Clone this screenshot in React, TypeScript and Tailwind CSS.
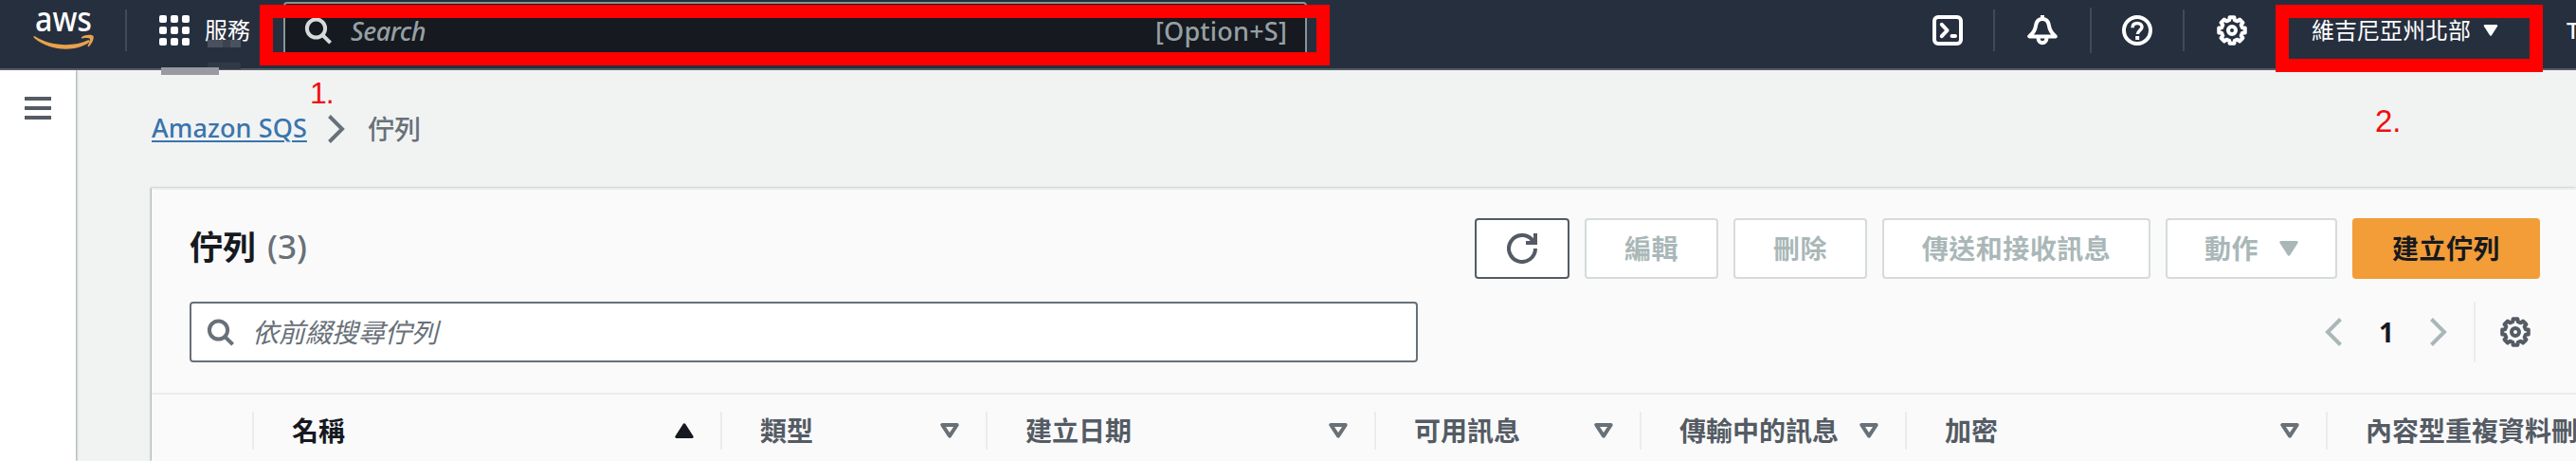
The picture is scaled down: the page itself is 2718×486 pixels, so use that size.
import React from "react";

type IconProps = { className?: string };

const cjk = "font-['Noto_Sans_CJK_TC',sans-serif]";
const latin = "font-['Noto_Sans','Noto_Sans_CJK_TC',sans-serif]";

function gearPath(): string {
  const pts: string[] = [];
  for (let i = 0; i < 8; i++) {
    const base = i * 45 - 90;
    const steps: [number, number][] = [
      [-14.5, 11.2],
      [-10, 14],
      [10, 14],
      [14.5, 11.2],
    ];
    for (const [deg, r] of steps) {
      const a = ((base + deg) * Math.PI) / 180;
      pts.push(`${(16 + r * Math.cos(a)).toFixed(2)} ${(16 + r * Math.sin(a)).toFixed(2)}`);
    }
  }
  return `M${pts.join("L")}Z`;
}
const GEAR = gearPath();

function GearIcon({ className }: IconProps) {
  return (
    <svg viewBox="0 0 32 32" className={`size-8 shrink-0 ${className ?? ""}`} fill="none" stroke="currentColor" strokeWidth={4} strokeLinejoin="round">
      <path d={GEAR} />
      <circle cx="16" cy="16" r="4" />
    </svg>
  );
}

function SearchIcon({ className }: IconProps) {
  return (
    <svg viewBox="0 0 32 32" className={`size-8 shrink-0 ${className ?? ""}`} fill="none" stroke="currentColor" strokeWidth={4}>
      <circle cx="13.5" cy="13" r="9.6" />
      <path d="M20.2 19.8L28.6 28.2" />
    </svg>
  );
}

function TerminalIcon() {
  return (
    <svg viewBox="0 0 32 32" className="size-8" fill="none" stroke="currentColor" strokeWidth={4} strokeLinecap="round" strokeLinejoin="round">
      <rect x="2" y="2" width="28" height="28" rx="4" />
      <path d="M9.8 9.8l5.8 6.2l-5.8 6.2" />
      <path d="M20.5 22h3.5" />
    </svg>
  );
}

function BellIcon() {
  return (
    <svg viewBox="0 0 32 32" className="size-8" fill="none" stroke="currentColor" strokeWidth={4} strokeLinejoin="round">
      <path d="M16 4c-4 0-6.2 2.8-6.8 6.4C8.4 16 6.6 19 2.2 22.4h27.6C25.4 19 23.6 16 22.8 10.4C22.2 6.8 20 4 16 4z" />
      <path d="M16 0v4" />
      <path d="M11.6 23v1.8a4.4 4.4 0 0 0 8.8 0V23" />
    </svg>
  );
}

function HelpIcon() {
  return (
    <svg viewBox="0 0 32 32" className="size-8" fill="none" stroke="currentColor" strokeWidth={4}>
      <circle cx="16" cy="16" r="14" />
      <path d="M11 13.2C11 9.8 13 8.4 16 8.4s5 1.7 5 4.2c0 3-4.6 3.8-4.6 7.4" strokeWidth={3.5} />
      <path d="M14.2 22h4v4h-4z" fill="currentColor" stroke="none" />
    </svg>
  );
}

function RefreshIcon() {
  return (
    <svg viewBox="0 0 32 32" className="size-8" fill="none" stroke="currentColor" strokeWidth={4}>
      <path d="M30 16A14 14 0 1 1 27 7.3" />
      <path d="M30 0v10H20" />
      <path d="M24 8l4-3v5z" fill="currentColor" stroke="none" />
    </svg>
  );
}

function AwsLogo() {
  return (
    <svg viewBox="0 0 68 44" className="h-11 w-[68px] overflow-visible">
      <text x="2" y="23" fontSize="36" fill="#ffffff" textLength="60" lengthAdjust="spacingAndGlyphs" fontFamily="'Noto Sans', sans-serif" fontWeight="500">
        aws
      </text>
      <path d="M1.5 28C18 39 43 39.5 57.5 32.5C59.5 31.7 60.5 33.5 59 34.8C43 46 16 43 1 30C0 28.8 0.5 27.5 1.5 28Z" fill="#e8a24c" />
      <path d="M51 29.2C55 26.2 62 26.4 63.5 28C64.5 30.5 62 36.5 58.8 39C57.8 39.5 57.3 39 57.7 38C59 35.5 60.5 32 59.8 30.8C58.8 29.7 55 30 52 30.4C50.8 30.5 50.5 29.9 51 29.2Z" fill="#e8a24c" />
    </svg>
  );
}

function AppsIcon() {
  return (
    <div className="grid size-8 grid-cols-3 gap-1">
      {Array.from({ length: 9 }, (_, i) => (
        <span key={i} className="size-2 rounded-[2px] bg-white" />
      ))}
    </div>
  );
}

function CaretDown({ className }: IconProps) {
  return (
    <svg viewBox="0 0 20 16" className={`shrink-0 ${className ?? ""}`} fill="currentColor" stroke="currentColor" strokeWidth={3} strokeLinejoin="round">
      <path d="M1.8 1.5h16.4L10 14.2z" />
    </svg>
  );
}

function SortDown() {
  return (
    <svg viewBox="0 0 20 16" className="h-4 w-5 shrink-0 text-[#687078]" fill="none" stroke="currentColor" strokeWidth={4} strokeLinejoin="round">
      <path d="M2.3 2h15.4L10 13.6z" />
    </svg>
  );
}

function SortUp() {
  return (
    <svg viewBox="0 0 20 16" className="h-4 w-5 shrink-0 text-[#16191f]" fill="currentColor" stroke="currentColor" strokeWidth={3} strokeLinejoin="round">
      <path d="M1.8 14.5h16.4L10 1.8z" />
    </svg>
  );
}

function Chevron({ dir, className }: { dir: "left" | "right"; className?: string }) {
  return (
    <svg viewBox="0 0 18 30" className={`h-[30px] w-[18px] shrink-0 ${className ?? ""}`} fill="none" stroke="currentColor" strokeWidth={4}>
      <path d={dir === "left" ? "M16.5 1.5L3 15L16.5 28.5" : "M1.5 1.5L15 15L1.5 28.5"} />
    </svg>
  );
}

function Header() {
  return (
    <header className="relative flex h-[74px] w-full shrink-0 items-start border-b-2 border-[#545b64] bg-[#262f3e] text-white">
      <div className="mt-[10px] ml-[35px]">
        <AwsLogo />
      </div>
      <div className="mt-[10px] ml-[29px] h-11 w-0.5 bg-[#424a56]" />
      <div className="mt-4 ml-[34px]">
        <AppsIcon />
      </div>
      <div className={`mt-[11px] ml-4 w-12 text-[24px] leading-[40px] ${cjk}`}>服務</div>
      <div className="mt-0.5 ml-[35px] flex h-[60px] w-[1080px] items-start rounded-[4px] border-2 border-[#879596] bg-[#16191f] pt-[13px] pr-[19px] pl-[19px]">
        <SearchIcon className="text-[#d5dbdb]" />
        <span className={`ml-[18px] text-[27px] leading-8 font-medium text-[#95a0a3] italic tracking-[-0.5px] ${latin}`}>Search</span>
        <span className={`ml-auto text-[27px] leading-8 font-medium tracking-[0.2px] text-[#95a0a3] ${latin}`}>[Option+S]</span>
      </div>
      <div className="mt-4 ml-[660px]">
        <TerminalIcon />
      </div>
      <div className="mt-[10px] ml-8 h-11 w-0.5 bg-[#424a56]" />
      <div className="mt-4 ml-[34px]">
        <BellIcon />
      </div>
      <div className="mt-2 ml-[34px] h-12 w-0.5 bg-[#424a56]" />
      <div className="mt-4 ml-8">
        <HelpIcon />
      </div>
      <div className="mt-[10px] ml-8 h-11 w-0.5 bg-[#424a56]" />
      <div className="mt-4 ml-[34px]">
        <GearIcon />
      </div>
      <div className={`mt-[11px] ml-[68px] w-[169px] text-[24px] leading-[40px] whitespace-nowrap ${cjk}`}>維吉尼亞州北部</div>
      <CaretDown className="mt-[26px] ml-3 h-3 w-4" />
      <div className={`mt-4 ml-[72px] w-[10px] text-[24px] leading-8 font-medium ${latin}`}>T</div>

      <div className="absolute top-[42px] left-[219px] flex h-2 w-[35px]">
        <span className="w-4 bg-[#4a515e]" />
        <span className="w-2 bg-[#3b4351]" />
        <span className="w-[11px] bg-[#4a515e]" />
      </div>
      <div className="absolute top-[66px] left-[219px] h-[7px] w-[35px] bg-[#303946]" />
      <div className="absolute top-[71px] left-[170px] h-2 w-[61px] bg-[#979ba1]" />
      <div className="absolute top-[5px] left-[274px] h-16 w-[1129px] border-[14px] border-[#ff0000]" />
      <div className="absolute top-[5px] left-[2401px] h-[71px] w-[282px] border-[14px] border-[#ff0000]" />
      <div className="absolute top-[80px] left-[327px] font-['Liberation_Sans',sans-serif] text-[32px] leading-[36px] tracking-[-1px] text-[#f20d0d]">1.</div>
      <div className="absolute top-[110px] left-[2506px] font-['Liberation_Sans',sans-serif] text-[33px] leading-[36px] text-[#f20d0d]">2.</div>
    </header>
  );
}

function Button({ label, children, className }: { label?: string; children?: React.ReactNode; className: string }) {
  return (
    <button className={`flex h-16 shrink-0 items-center justify-center rounded-[4px] border-2 text-[28px] leading-[40px] font-bold tracking-[0.5px] whitespace-nowrap ${cjk} ${className}`}>
      {label && <span className="-mt-[3px]">{label}</span>}
      {children}
    </button>
  );
}

const disabled = "border-[#d5dbdb] bg-white text-[#aab7b8]";

type Column = { title: string; width: string; sort: "up" | "down" };

const columns: Column[] = [
  { title: "名稱", width: "w-[494px]", sort: "up" },
  { title: "類型", width: "w-[280px]", sort: "down" },
  { title: "建立日期", width: "w-[410px]", sort: "down" },
  { title: "可用訊息", width: "w-[280px]", sort: "down" },
  { title: "傳輸中的訊息", width: "w-[280px]", sort: "down" },
  { title: "加密", width: "w-[444px]", sort: "down" },
  { title: "內容型重複資料刪除", width: "w-[400px]", sort: "down" },
];

function QueuePanel() {
  return (
    <section className="flex h-[288px] w-[2558px] flex-col overflow-hidden border-t-2 border-[#eaeded] bg-[#fafafa] shadow-[-1px_0_2px_#9aa3a8]">
      <div className="flex h-[94px] items-end pl-10">
        <h1 className={`flex h-16 items-center text-[35px] leading-[48px] ${latin}`}>
          <span className={`-mt-1.5 font-bold text-[#16191f] ${cjk}`}>佇列</span>
          <span className="-mt-1 ml-[12px] font-medium text-[#687078]">(3)</span>
        </h1>
        <div className="ml-auto flex gap-4 pr-[38px]">
          <Button className="w-[100px] border-[#545b64] bg-white text-[#545b64]">
            <RefreshIcon />
          </Button>
          <Button label="編輯" className={`w-[141px] ${disabled}`} />
          <Button label="刪除" className={`w-[141px] ${disabled}`} />
          <Button label="傳送和接收訊息" className={`w-[283px] ${disabled}`} />
          <Button label="動作" className={`w-[181px] ${disabled}`}>
            <CaretDown className="ml-[22px] h-4 w-5" />
          </Button>
          <Button label="建立佇列" className="w-[198px] border-[#f29d38] bg-[#f29d38] text-[#16191f]" />
        </div>
      </div>
      <div className="mt-6 flex h-16 shrink-0 items-center pl-10">
        <div className="flex h-16 w-[1296px] items-center rounded-[4px] border-2 border-[#687078] bg-white pl-[14px] text-[#687078]">
          <SearchIcon className="mt-0.5 ml-px" />
          <span className={`-mt-0.5 ml-[17px] text-[28px] leading-[40px] italic ${cjk}`}>依前綴搜尋佇列</span>
        </div>
        <Chevron dir="left" className="ml-[957px] text-[#aab7b8]" />
        <span className={`ml-[39px] w-4 text-[28px] leading-[40px] font-bold text-[#16191f] ${latin}`}>1</span>
        <Chevron dir="right" className="ml-[38px] text-[#aab7b8]" />
        <div className="ml-[28px] h-16 w-0.5 bg-[#eaeded]" />
        <GearIcon className="ml-[26px] text-[#545b64]" />
      </div>
      <div className="mt-8 flex h-[72px] shrink-0 items-start border-t-2 border-[#eaeded] pt-[18px]">
        <div className="h-10 w-[108px] shrink-0 border-r-2 border-[#eaeded]" />
        {columns.map((c) => (
          <div
            key={c.title}
            className={`flex h-10 shrink-0 items-center justify-between border-r-2 border-[#eaeded] pr-7 pl-10 text-[28px] leading-[40px] font-bold whitespace-nowrap ${cjk} ${c.width} ${
              c.sort === "up" ? "text-[#16191f]" : "text-[#545b64]"
            }`}
          >
            <span className="-mt-[3px]">{c.title}</span>
            {c.sort === "up" ? <SortUp /> : <SortDown />}
          </div>
        ))}
      </div>
    </section>
  );
}

export default function App() {
  return (
    <div className="flex h-[486px] w-[2718px] flex-col overflow-hidden bg-[#f1f3f3]">
      <Header />
      <div className="flex h-[412px]">
        <aside className="w-20 shrink-0 bg-white pt-7 pl-[26px] shadow-[1px_0_2px_#9aa3a8]">
          <div className="flex w-7 flex-col gap-1.5">
            <span className="h-1 bg-[#545b64]" />
            <span className="h-1 bg-[#545b64]" />
            <span className="h-1 bg-[#545b64]" />
          </div>
        </aside>
        <main className="flex flex-col pl-20">
          <nav className="flex h-[124px] shrink-0 items-start pt-[41px] text-[28px] leading-[40px]">
            <a className={`w-[164px] whitespace-nowrap text-[27px] font-medium tracking-[0.1px] text-[#3a74ae] underline decoration-2 underline-offset-[3px] ${latin}`}>Amazon SQS</a>
            <Chevron dir="right" className="mt-[6px] ml-[22px] text-[#687078]" />
            <span className={`ml-[24px] font-medium text-[#687078] ${cjk}`}>佇列</span>
          </nav>
          <QueuePanel />
        </main>
      </div>
    </div>
  );
}
